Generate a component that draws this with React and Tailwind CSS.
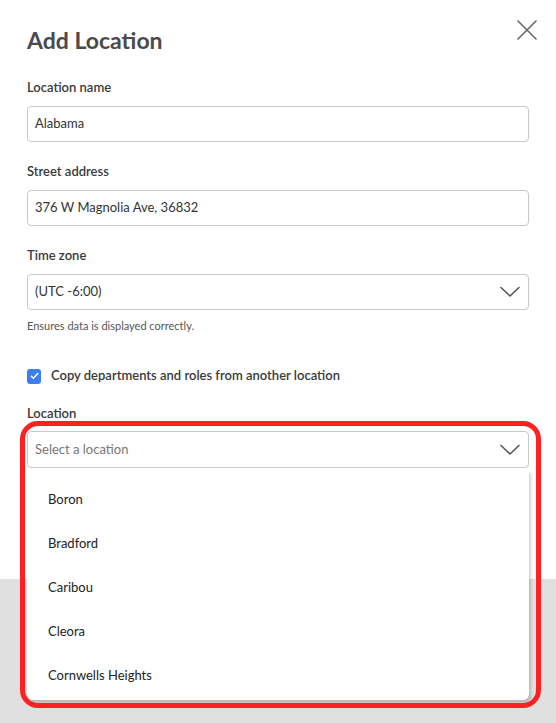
import { useState } from "react";

const locations = ["Boron", "Bradford", "Caribou", "Cleora", "Cornwells Heights"];

function Chevron() {
  return (
    <svg width="20" height="12" viewBox="0 0 20 12" fill="none" className="shrink-0">
      <path d="M1 1.5 L10 10 L19 1.5" stroke="#555" strokeWidth="1.6" strokeLinecap="round" strokeLinejoin="round" />
    </svg>
  );
}

export default function App() {
  const [copy, setCopy] = useState(true);

  return (
    <div
      className="relative h-[723px] w-[556px] overflow-hidden bg-[#e0e0e0] text-[#333]"
      style={{ fontFamily: "Lato, 'Open Sans', sans-serif" }}
    >
      <div className="h-[579px] bg-white px-[27px] pt-[24px]">
        {/* Header */}
        <div className="flex items-start justify-between">
          <h1 className="text-[23px] leading-[32px] font-bold text-[#4a4a4a]">Add Location</h1>
          <button className="mt-[-4px] mr-[-8px] p-0">
            <svg width="20" height="20" viewBox="0 0 20 20" fill="none">
              <path d="M1 1 L19 19 M19 1 L1 19" stroke="#666" strokeWidth="1.6" strokeLinecap="round" />
            </svg>
          </button>
        </div>

        {/* Location name */}
        <label className="mt-[21px] block text-[13px] leading-[20px] font-semibold text-[#3a3a3a]">Location name</label>
        <div className="mt-[9px] flex h-[36px] items-center rounded-[4px] border border-[#c8c8c8] px-[7px] text-[13px] text-[#333]">
          Alabama
        </div>

        {/* Street address */}
        <label className="mt-[19px] block text-[13px] leading-[20px] font-semibold text-[#3a3a3a]">Street address</label>
        <div className="mt-[9px] flex h-[36px] items-center rounded-[4px] border border-[#c8c8c8] px-[7px] text-[13px] text-[#333]">
          376 W Magnolia Ave, 36832
        </div>

        {/* Time zone */}
        <label className="mt-[19px] block text-[13px] leading-[20px] font-semibold text-[#3a3a3a]">Time zone</label>
        <div className="mt-[9px] flex h-[36px] items-center justify-between rounded-[4px] border border-[#c8c8c8] pl-[7px] pr-[8px] text-[13px] text-[#333]">
          <span>(UTC -6:00)</span>
          <Chevron />
        </div>
        <p className="mt-[8px] text-[11px] leading-[16px] text-[#555]">Ensures data is displayed correctly.</p>

        {/* Copy checkbox */}
        <label className="mt-[32px] flex h-[20px] items-center gap-[10px] text-[13px] font-semibold text-[#3a3a3a]">
          <span
            onClick={() => setCopy(!copy)}
            className="flex h-[15px] w-[14px] items-center justify-center rounded-[3px] bg-[#3b7ff0]"
          >
            {copy && (
              <svg width="9" height="8" viewBox="0 0 9 8" fill="none">
                <path d="M1.2 4.2 L3.4 6.2 L7.8 1.6" stroke="white" strokeWidth="1.5" strokeLinecap="round" strokeLinejoin="round" />
              </svg>
            )}
          </span>
          Copy departments and roles from another location
        </label>

        {/* Location select */}
        <label className="mt-[17px] block text-[13px] leading-[20px] font-semibold text-[#3a3a3a]">Location</label>
        <div className="relative mt-[8px]">
          <div className="flex h-[37px] items-center justify-between rounded-[4px] border border-[#c8c8c8] pl-[7px] pr-[8px] text-[13px] text-[#777]">
            <span>Select a location</span>
            <Chevron />
          </div>

          {/* Dropdown menu */}
          <div className="absolute left-0 right-0 top-[39px] z-10 h-[230px] overflow-hidden rounded-b-[6px] bg-white pt-[8px] shadow-[2px_3px_3px_rgba(0,0,0,0.18)]">
            {locations.map((loc) => (
              <div key={loc} className="flex h-[44px] items-center px-[21px] text-[13px] text-[#222]">
                {loc}
              </div>
            ))}
          </div>
        </div>
      </div>

      {/* Red highlight annotation */}
      <div className="pointer-events-none absolute left-[20px] top-[421px] z-20 h-[287px] w-[521px] rounded-[18px] border-[5px] border-[#ff2121]" />
    </div>
  );
}
